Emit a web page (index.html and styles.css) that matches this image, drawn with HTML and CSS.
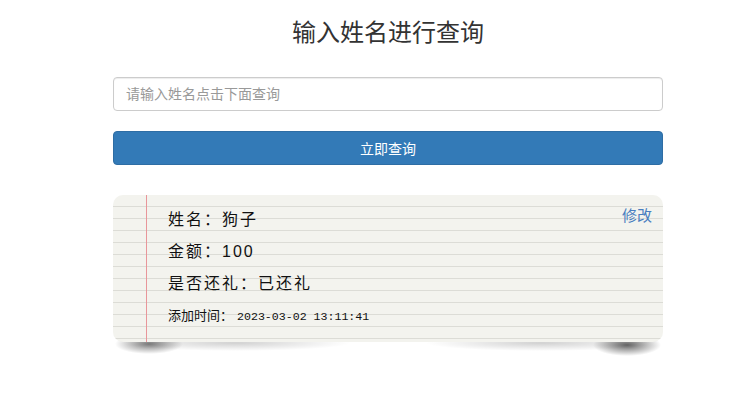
FILE: index.html
```html
<!DOCTYPE html>
<html lang="zh-CN">
<head>
    <meta charset="UTF-8">
    <title>输入姓名进行查询</title>
    <link rel="stylesheet" href="styles.css">
</head>
<body>
    <div class="container">
        <h3 class="title">输入姓名进行查询</h3>

        <form class="search-form">
            <input type="text" class="form-input" placeholder="请输入姓名点击下面查询">
            <button type="button" class="btn-search">立即查询</button>
        </form>

        <div class="note-wrap">
            <span class="curl curl-left"></span>
            <span class="curl curl-right"></span>
            <div class="note">
                <a href="#" class="note-edit">修改</a>
                <div class="note-row">姓名：狗子</div>
                <div class="note-row">金额：100</div>
                <div class="note-row">是否还礼：已还礼</div>
                <div class="note-row small">添加时间：<span class="note-time">2023-03-02 13:11:41</span></div>
            </div>
        </div>
    </div>
</body>
</html>
```

FILE: styles.css
```css
body {
    margin: 0;
    font-family: "Liberation Sans", "Noto Sans CJK SC", sans-serif;
    font-size: 14px;
    color: #333;
    background-color: #fff;
}

.container {
    width: 550px;
    margin-left: 113px;
    padding-bottom: 50px;
}

.title {
    margin: 20px 0 0;
    font-size: 24px;
    font-weight: 400;
    line-height: 1.1;
    text-align: center;
    color: #333;
}

.search-form {
    display: flex;
    flex-direction: column;
    gap: 20px;
    margin-top: 31px;
}

.form-input {
    height: 34px;
    padding: 6px 12px;
    border: 1px solid #ccc;
    border-radius: 4px;
    font-family: inherit;
    font-size: 14px;
    color: #555;
    box-sizing: border-box;
    box-shadow: inset 0 1px 1px rgba(0, 0, 0, 0.075);
}

.form-input::placeholder {
    color: #999;
}

.btn-search {
    height: 34px;
    border: 1px solid #2e6da4;
    border-radius: 4px;
    background-color: #337ab7;
    color: #fff;
    font-family: inherit;
    font-size: 14px;
    cursor: pointer;
}

/* curled paper shadow */
.note-wrap {
    position: relative;
    margin-top: 30px;
}

.curl {
    position: absolute;
    top: calc(100% - 12px);
    display: block;
    width: 240px;
    height: 30px;
}

.curl-left {
    left: 2px;
    background:
        radial-gradient(ellipse 34px 10px at 34px 14px, rgba(0, 0, 0, 0.5), rgba(0, 0, 0, 0)),
        radial-gradient(ellipse 115px 8px at 120px 13px, rgba(0, 0, 0, 0.18), rgba(0, 0, 0, 0));
}

.curl-right {
    right: 2px;
    background:
        radial-gradient(ellipse 34px 11px at 206px 15px, rgba(0, 0, 0, 0.6), rgba(0, 0, 0, 0)),
        radial-gradient(ellipse 115px 8px at 120px 13px, rgba(0, 0, 0, 0.18), rgba(0, 0, 0, 0));
}

.note {
    position: relative;
    padding: 9px 0 9px 55px;
    border-radius: 10px;
    background-color: #f3f3ee;
    background-image:
        linear-gradient(90deg, transparent 33px, #e8969a 33px, #e8969a 34px, transparent 34px),
        linear-gradient(transparent 11px, #dcdcd6 11px, #dcdcd6 12px);
    background-size: 100% 100%, 100% 12px;
    font-family: "Liberation Sans", "Noto Sans CJK SC", sans-serif;
    color: #111;
}

.note-row {
    line-height: 32px;
    font-size: 16px;
    letter-spacing: 2px;
}

.note-row.small {
    font-size: 13px;
    letter-spacing: 0;
}

.note-time {
    font-family: "Liberation Mono", monospace;
    font-size: 11.6px;
    margin-left: 4px;
}

.note-edit {
    position: absolute;
    top: 9px;
    right: 11px;
    font-size: 15px;
    color: #4a7ec0;
    text-decoration: none;
}
```
